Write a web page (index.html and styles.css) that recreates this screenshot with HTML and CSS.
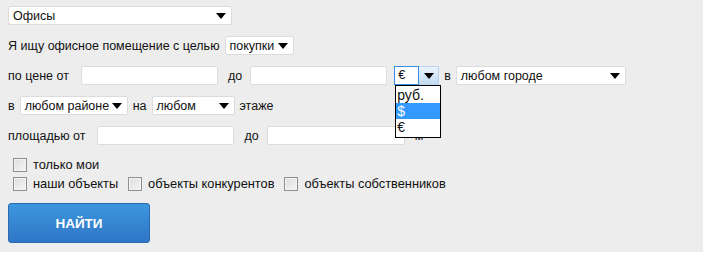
FILE: index.html
```html
<!DOCTYPE html>
<html lang="ru">
<head>
    <meta charset="UTF-8">
    <title>Поиск</title>
    <link rel="stylesheet" href="styles.css">
</head>
<body>
    <div class="search">
        <div class="row">
            <div class="sel w-type"><span>Офисы</span><i class="arr"></i></div>
        </div>
        <div class="row">
            <span class="lbl">Я ищу офисное помещение с целью</span>
            <div class="sel w-goal"><span>покупки</span><i class="arr"></i></div>
        </div>
        <div class="row">
            <span class="lbl">по цене от</span>
            <div class="inp w-price"></div>
            <span class="lbl after">до</span>
            <div class="inp to w-price"></div>
            <div class="cur">
                <span class="cur-val">€</span>
                <span class="cur-btn"><i class="arr"></i></span>
                <ul class="cur-list">
                    <li>руб.</li>
                    <li class="on">$</li>
                    <li>€</li>
                </ul>
            </div>
            <span class="lbl">в</span>
            <div class="sel w-city"><span>любом городе</span><i class="arr"></i></div>
        </div>
        <div class="row">
            <span class="lbl">в</span>
            <div class="sel w-area"><span>любом районе</span><i class="arr"></i></div>
            <span class="lbl">на</span>
            <div class="sel w-floor"><span>любом</span><i class="arr"></i></div>
            <span class="lbl">этаже</span>
        </div>
        <div class="row">
            <span class="lbl">площадью от</span>
            <div class="inp w-price"></div>
            <span class="lbl after">до</span>
            <div class="inp to w-area2"></div>
            <span class="lbl after">м</span>
        </div>
        <div class="checks">
            <div class="crow">
                <label class="chk"><i class="box"></i>только мои</label>
            </div>
            <div class="crow">
                <label class="chk"><i class="box"></i>наши объекты</label>
                <label class="chk"><i class="box"></i>объекты конкурентов</label>
                <label class="chk"><i class="box"></i>объекты собственников</label>
            </div>
        </div>
        <button class="go">НАЙТИ</button>
    </div>
</body>
</html>
```

FILE: styles.css
```css
*{margin: 0;padding: 0;box-sizing: border-box;}
html, body{
    background: #fff;
}

.search{
    width: 703px;
    height: 252px;
    background: #ededed;
    padding: 6px 8px 0;
    font-family: "Liberation Sans", Arial, sans-serif;
    font-size: 12.5px;
    color: #111;
}

.row{
    display: flex;
    align-items: center;
    gap: 5px;
    height: 19px;
    margin-bottom: 11px;
    white-space: nowrap;
}

.sel, .inp{
    flex-shrink: 0;
    height: 19px;
    background: #fff;
    border: 1px solid #dcdcdc;
    border-radius: 2px;
}

.inp{
    margin-left: 7px;
}

.inp.to{
    margin-left: 3px;
}

.lbl.after{
    margin-left: 5px;
}

.sel{
    display: flex;
    align-items: center;
    justify-content: space-between;
    padding: 0 5px 0 4px;
}

.arr{
    flex-shrink: 0;
    width: 0;
    height: 0;
    border-left: 5px solid transparent;
    border-right: 5px solid transparent;
    border-top: 6px solid #000;
}

.w-type{width: 224px;}
.w-goal{width: 69px;}
.w-price{width: 137px;}
.w-area2{width: 138px;}
.w-city{width: 170px;}
.w-area{width: 108px;}
.w-floor{width: 83px;}

.cur{
    position: relative;
    display: flex;
    flex-shrink: 0;
    width: 45px;
    height: 19px;
    margin-left: 2px;
}

.cur-val{
    width: 25px;
    height: 19px;
    background: #fff;
    border: 1px solid #3a8ee6;
    padding-left: 3px;
    line-height: 17px;
}

.cur-btn{
    flex: 1;
    display: flex;
    align-items: center;
    justify-content: center;
    background: linear-gradient(#eaf3fc, #c3dcf2);
    border: 1px solid #b8d3ee;
    border-left: none;
}

.cur-list{
    position: absolute;
    left: 1px;
    top: 19px;
    width: 46px;
    background: #fff;
    border: 1px solid #000;
    list-style: none;
    z-index: 2;
    padding: 1px 0 2px;
}

.cur-list li{
    height: 16px;
    line-height: 16px;
    padding-left: 1px;
    font-size: 14px;
}

.cur-list li.on{
    background: #3399ff;
    color: #fff;
}

.checks{
    margin-top: -1px;
    font-size: 12.8px;
}

.crow{
    display: flex;
    align-items: center;
    gap: 10px;
    height: 19px;
    padding-left: 5px;
}

.chk{
    display: flex;
    align-items: center;
    gap: 6px;
}

.box{
    width: 14px;
    height: 14px;
    border: 1px solid #8e8f8f;
    background: linear-gradient(135deg, #dcdcdc, #f6f6f6);
    box-shadow: inset 0 0 0 1px #f4f4f4;
}

.go{
    margin-top: 10px;
    width: 142px;
    height: 40px;
    border: 1px solid #2b68b0;
    border-radius: 3px;
    background: linear-gradient(#3c97de, #2f76c6);
    color: #fff;
    font-family: "Liberation Sans", Arial, sans-serif;
    font-size: 13.5px;
    font-weight: bold;
}
```
